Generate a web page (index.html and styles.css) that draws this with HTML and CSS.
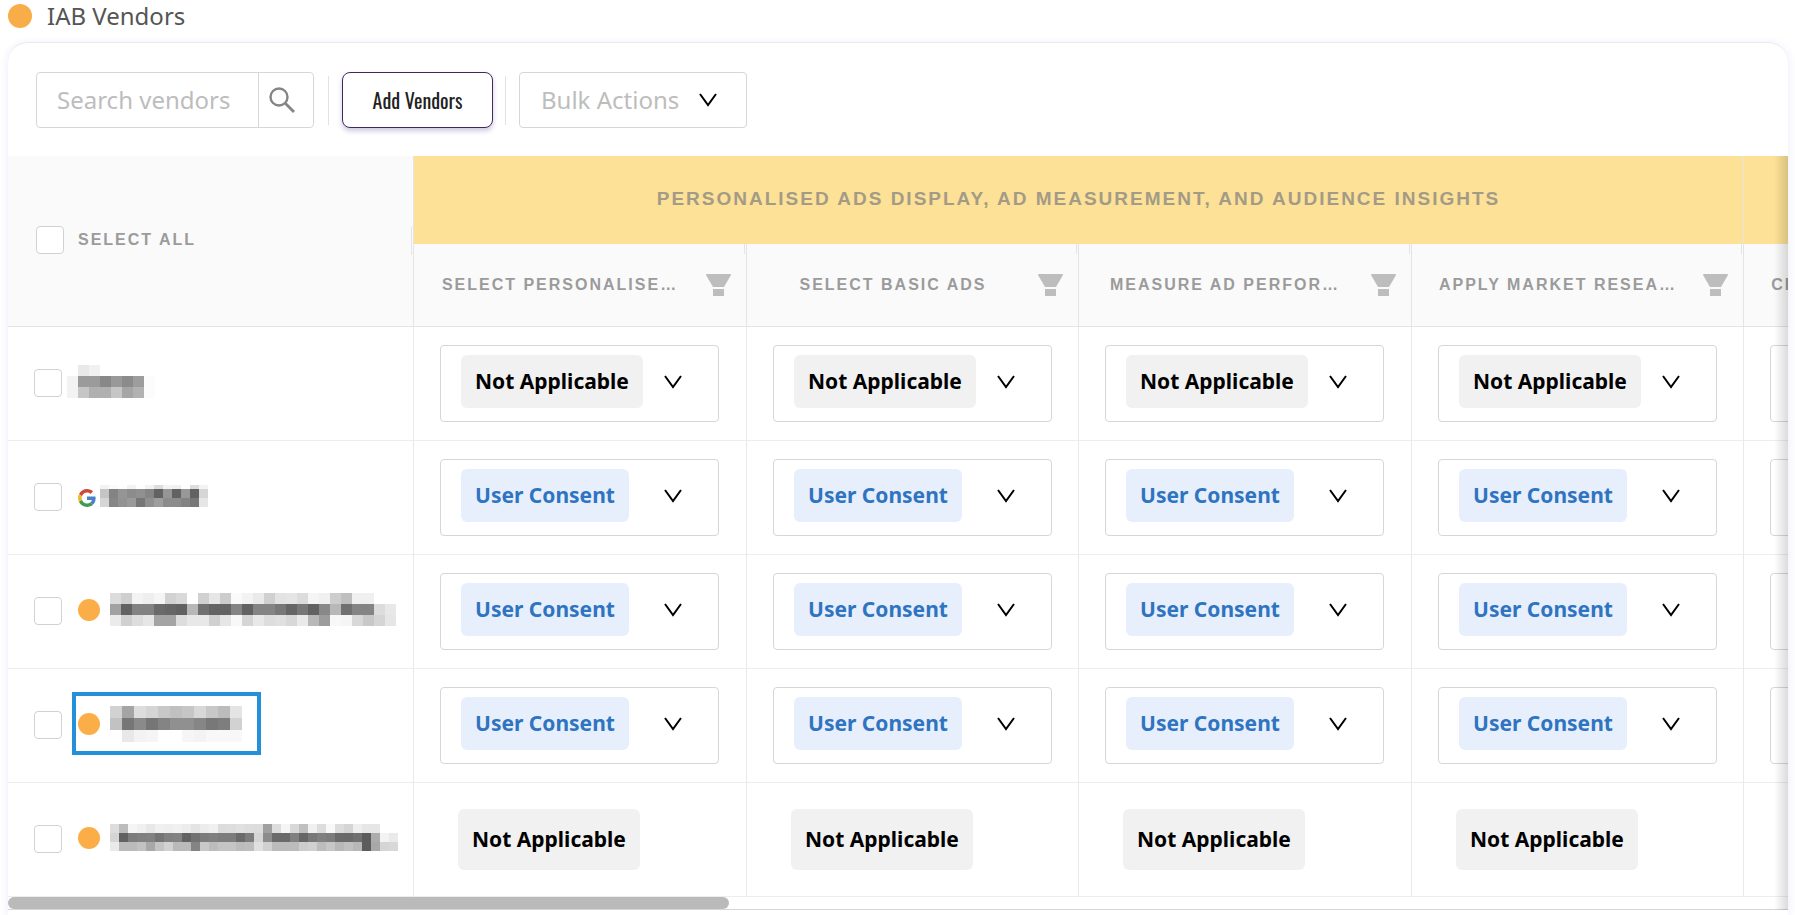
FILE: index.html
```html
<!DOCTYPE html>
<html lang="en">
<head>
    <meta charset="UTF-8">
    <meta name="viewport" content="width=device-width, initial-scale=1.0">
    <title>IAB Vendors</title>
    <link rel="stylesheet" href="styles.css">
</head>
<body>
    <h1 class="page-title"><span class="title-dot"></span>IAB Vendors</h1>

    <div class="card">
        <div class="toolbar">
            <form class="search-box">
                <input type="text" class="search-input" placeholder="Search vendors" aria-label="Search vendors">
                <button type="button" class="search-button" aria-label="Search">
                    <svg width="26" height="26" viewBox="0 0 26 26" fill="none" stroke="#858585" stroke-width="2.4">
                        <circle cx="10" cy="10" r="8.5"/>
                        <path d="M16 16L25 25" stroke-width="2.8"/>
                    </svg>
                </button>
            </form>
            <span class="divider"></span>
            <button type="button" class="add-button">Add Vendors</button>
            <span class="divider"></span>
            <div class="bulk-box">
                <select class="bulk-select" aria-label="Bulk Actions">
                    <option>Bulk Actions</option>
                </select>
                <svg class="chevron" viewBox="0 0 18 14"><path d="M1 1L9 12L17 1"/></svg>
            </div>
        </div>

        <div class="table-area">
            <div class="table-scroll">
                <table class="vendor-table">
                    <colgroup>
                        <col class="col-name"><col class="col-wide"><col class="col"><col class="col-wide"><col class="col"><col class="col-wide">
                    </colgroup>
                    <thead>
                        <tr class="group-row">
                            <th rowspan="2" class="select-all">
                                <label class="select-all-label"><input type="checkbox" class="check"> SELECT ALL</label>
                            </th>
                            <th colspan="4" class="group">PERSONALISED ADS DISPLAY, AD MEASUREMENT, AND AUDIENCE INSIGHTS</th>
                            <th class="group"></th>
                        </tr>
                        <tr class="purpose-row" id="purposes"></tr>
                    </thead>
                    <tbody id="vendors"></tbody>
                </table>
            </div>
            <div class="scrollbar"><div class="scrollbar-thumb"></div></div>
        </div>
    </div>

    <script>
        const purposes = ["SELECT PERSONALISE…", "SELECT BASIC ADS", "MEASURE AD PERFOR…", "APPLY MARKET RESEA…", "CREATE PERSONALISE…"];

        const googleIcon = `<svg class="google" viewBox="0 0 48 48">
            <path fill="#d0473c" d="M24 9.500c3.500 0 6.700 1.200 9.200 3.600l6.900-6.900C35.900 2.400 30.500 0 24 0 14.600 0 6.500 5.400 2.600 13.200l8 6.200C12.400 13.700 17.700 9.500 24 9.500z"/>
            <path fill="#4a80cc" d="M47 24.500c0-1.600-.2-3.100-.4-4.500H24v9h12.900c-.6 3-2.200 5.500-4.800 7.200l7.700 6C44.400 38 47 31.800 47 24.500z"/>
            <path fill="#efb92c" d="M10.500 28.600c-.5-1.500-.8-3-.8-4.600s.3-3.100.8-4.600l-8-6.200C.9 16.500 0 20.100 0 24s.9 7.500 2.600 10.800z"/>
            <path fill="#3f9b54" d="M24 48c6.500 0 11.900-2.100 15.900-5.800l-7.700-6c-2.200 1.500-4.900 2.300-8.200 2.300-6.300 0-11.600-4.200-13.500-9.900l-8 6.200C6.500 42.600 14.600 48 24 48z"/>
        </svg>`;
        const dotIcon = `<span class="vendor-dot"></span>`;

        // masked names: one hex shade per block
        const vendors = [
            { icon: "", cls: "plain", status: "na", size: 11, mask: [
                "ff e9 f1 ff ff ff ff ff",
                "f3 9b 9b 88 99 8b 9d fc",
                "f3 c6 b0 b0 c6 a5 b2 fc"] },
            { icon: googleIcon, cls: "tight", status: "consent", size: 9, mask: [
                "c4 83 95 8c 90 85 62 95 62 98 62 d6",
                "d5 86 92 9a 77 90 9e 8c 8c 84 77 e6"], top: "f3 fb fe f3 fe f3 dd f3 f0 fe dd f3" },
            { icon: dotIcon, cls: "", status: "consent", size: 11, mask: [
                "dc cf f3 ee f5 d2 d9 ff d0 e6 cc fa f3 ea d0 e3 e5 dc f5 f0 cd bf f0 f0 ff ff",
                "a2 62 82 82 6a 66 62 b8 70 64 64 84 62 84 84 78 66 78 62 88 b8 70 84 84 dc e8",
                "eb d0 dd e6 a4 a4 dd e8 e8 d0 e6 f8 d5 e8 dd e0 d8 ea b8 9c f8 f5 d8 c8 d5 e6"] },
            { icon: dotIcon, cls: "marked", status: "consent", size: 12, mask: [
                "d2 a4 dd d5 c8 c0 c6 d8 c8 bc e4",
                "c2 76 8a 76 84 90 90 86 78 7e d2",
                "ff e8 f3 f5 ff ff f6 f3 f8 f8 f8"] },
            { icon: dotIcon, cls: "", status: "locked", size: 9, mask: [
                "dd bc f5 f0 e8 f0 ee f0 ec e4 ec f0 dc dd e0 dd dc a0 dd f5 d8 c0 f0 dd f8 dd d5 ee e6 e6 ff ff",
                "d5 62 7c 80 82 74 80 82 62 72 7c 80 7c 7c 6a 7c d5 8c 6a 6a 80 66 78 80 7c 6a 6a 70 5c ac f3 ea",
                "ea bb bb c2 a8 c4 d2 ba ba 84 c8 bc c4 c4 bc be e0 d0 bb bb bc cc d0 bc c6 b8 c0 b8 5c a8 d5 d8"] }
        ];

        function maskSvg(v) {
            const s = v.size;
            const pad = v.top ? 4 : 0;
            let rects = "";
            const addRow = (row, y, h) => row.split(" ").forEach((c, i) => {
                rects += `<rect x="${i * s}" y="${y}" width="${s}" height="${h}" fill="#${c}${c}${c}"/>`;
            });
            if (v.top) addRow(v.top, 0, pad);
            v.mask.forEach((row, i) => addRow(row, pad + i * s, s));
            const w = v.mask[0].split(" ").length * s;
            const h = pad + v.mask.length * s;
            return `<svg class="mask" width="${w}" height="${h}" shape-rendering="crispEdges">${rects}</svg>`;
        }

        function statusCell(status, label) {
            if (status === "locked") {
                return `<td><span class="tag tag-na tag-locked">Not Applicable</span></td>`;
            }
            const na = status === "na";
            return `<td><div class="status-box">
                <select class="tag ${na ? "tag-na" : "tag-consent"}" aria-label="${label}">
                    <option${na ? " selected" : ""}>Not Applicable</option>
                    <option${na ? "" : " selected"}>User Consent</option>
                </select>
                <svg class="chevron" viewBox="0 0 18 14"><path d="M1 1L9 12L17 1"/></svg>
            </div></td>`;
        }

        document.getElementById("purposes").innerHTML = purposes.map(p => `
            <th><div class="purpose"><span class="purpose-name">${p}</span>
                <button type="button" class="filter-button" aria-label="Filter">
                    <svg width="25" height="23" viewBox="0 0 25 23" fill="#bdbdbd">
                        <path d="M0 1q0-1 1-1h23q1 0 1 1l-7 12h-11z"/><path d="M7 15h11v7h-11z"/>
                    </svg>
                </button></div></th>`).join("");

        document.getElementById("vendors").innerHTML = vendors.map((v, i) => `
            <tr><td><div class="vendor">
                <input type="checkbox" class="check" aria-label="Vendor ${i + 1}">
                <div class="vendor-name ${v.cls}">${v.icon}${maskSvg(v)}</div>
            </div></td>${purposes.map(p => statusCell(v.status, p)).join("")}</tr>`).join("");
    </script>
</body>
</html>
```
FILE: styles.css
```css
* {
    box-sizing: border-box;
}
body {
    font-family: "Noto Sans", "Open Sans", sans-serif;
    margin: 0;
    padding: 0 7px 0 8px;
    background: #fff;
    display: flex;
    flex-direction: column;
    height: 100vh;
    overflow: hidden;
}
button,
input,
select {
    font-family: inherit;
    margin: 0;
}
.page-title {
    display: flex;
    align-items: center;
    gap: 15px;
    height: 32px;
    margin: 0 0 10px;
    font-size: 24px;
    line-height: 32px;
    font-weight: 400;
    color: #555;
}
.title-dot {
    width: 24px;
    height: 24px;
    border-radius: 50%;
    background: #f9ad48;
}
.card {
    flex: 1;
    background: #fff;
    border-top: 1px solid #e6eaf1;
    border-radius: 20px 20px 0 0;
    box-shadow: 0 2px 10px rgba(80, 80, 220, 0.12);
}

/* Toolbar */
.toolbar {
    display: flex;
    align-items: center;
    padding: 29px 28px 28px;
}
.search-box {
    display: flex;
    height: 56px;
    width: 278px;
    border: 1px solid #d6d6d6;
    border-radius: 4px;
}
.search-input {
    flex: 1;
    min-width: 0;
    padding: 0 0 2px 20px;
    border: none;
    border-right: 1px solid #d6d6d6;
    background: none;
    font-size: 24px;
    outline: none;
}
.search-input::placeholder {
    color: #bdbdbd;
}
.search-button {
    width: 54px;
    padding: 0 10px;
    border: none;
    background: none;
    text-align: left;
    cursor: pointer;
}
.search-button svg {
    display: block;
}
.divider {
    width: 1px;
    height: 49px;
    margin: 0 13px 0 14px;
    background: #e2e2e2;
}
.divider:nth-of-type(2) {
    margin: 0 13px 0 12px;
}
.add-button {
    width: 151px;
    height: 56px;
    padding: 0;
    border: 1px solid #43285f;
    border-radius: 8px;
    background: #fff;
    box-shadow: 0 3px 5px rgba(60, 40, 130, 0.25);
    font-family: Oswald, Roboto, sans-serif;
    font-size: 20px;
    font-weight: 400;
    color: #222;
    cursor: pointer;
}
.bulk-box {
    display: flex;
    align-items: center;
    gap: 19px;
    width: 228px;
    height: 56px;
    padding-left: 21px;
    border: 1px solid #d6d6d6;
    border-radius: 4px;
}
.bulk-select {
    appearance: none;
    padding: 0 0 2px;
    border: none;
    background: none;
    font-size: 24px;
    color: #bdbdbd;
}
.chevron {
    width: 18px;
    height: 14px;
    fill: none;
    stroke: #000;
    stroke-width: 2;
}

/* Vendor table */
.table-area {
    position: relative;
}
.table-area::after {
    content: "";
    position: absolute;
    top: 0;
    right: 0;
    bottom: 0;
    width: 14px;
    background: linear-gradient(to right, rgba(0, 0, 0, 0), rgba(0, 0, 0, 0.14));
    pointer-events: none;
}
.table-scroll {
    overflow: hidden;
}
.vendor-table {
    width: 2069px;
    table-layout: fixed;
    border-collapse: separate;
    border-spacing: 0;
}
.col-name {
    width: 406px;
}
.col-wide {
    width: 333px;
}
.col {
    width: 332px;
}
th {
    position: relative;
    padding: 0;
    background: #fafafa;
    border-right: 1px solid #e4e4e4;
    border-bottom: 1px solid #e4e4e4;
    font-family: "Liberation Sans", Arial, sans-serif;
    font-size: 16px;
    font-weight: 700;
    letter-spacing: 2px;
    color: #9b9b9b;
}
td {
    height: 114px;
    padding: 0;
    border-right: 1px solid #e9e9e9;
    border-bottom: 1px solid #ededed;
}
.group-row {
    height: 88px;
}
.group {
    padding-bottom: 2px;
    background: #fce196;
    border-bottom: none;
    font-size: 19px;
    color: #a39b87;
}
.purpose-row {
    height: 83px;
}
.purpose-row th::after,
.select-all::after {
    content: "";
    position: absolute;
    top: 0;
    right: 1px;
    width: 1px;
    height: 10px;
    background: #e4e4e4;
}
.select-all::after {
    top: 71px;
    height: 28px;
}
.select-all-label {
    display: flex;
    align-items: center;
    gap: 14px;
    padding: 0 0 2px 28px;
}
.check {
    appearance: none;
    flex: none;
    width: 28px;
    height: 28px;
    border: 1px solid #d2d2d2;
    border-radius: 4px;
    background: #fff;
}
.check:checked {
    background: #2f74c0;
}
.purpose {
    display: flex;
    align-items: center;
    justify-content: space-between;
    padding: 0 15px 0 25px;
}
.purpose-name {
    width: 242px;
    white-space: nowrap;
}
.filter-button {
    padding: 0;
    border: none;
    background: none;
    cursor: pointer;
}
.filter-button svg {
    display: block;
}
.vendor {
    display: flex;
    align-items: center;
    gap: 16px;
    padding: 0 0 2px 26px;
}
.vendor-name {
    display: flex;
    align-items: center;
    gap: 10px;
    margin-bottom: 2px;
}
.vendor-name.plain {
    margin-left: -11px;
}
.vendor-name.tight {
    align-items: flex-end;
    gap: 4px;
}
.vendor-name.marked {
    width: 189px;
    height: 63px;
    margin-left: -6px;
    padding-left: 2px;
    border: 4px solid #2490d9;
}
.vendor-dot {
    width: 22px;
    height: 22px;
    border-radius: 50%;
    background: #fbad48;
}
.google {
    width: 18px;
    height: 18px;
}
.mask {
    display: block;
}
.status-box {
    display: grid;
    grid-template-columns: 182px 18px;
    justify-items: start;
    gap: 21px;
    width: 279px;
    height: 77px;
    margin-left: 26px;
    padding: 9px 0 13px 20px;
    border: 1px solid #d6d6d6;
    border-radius: 4px;
}
.status-box .chevron {
    align-self: center;
}
.tag {
    appearance: none;
    field-sizing: content;
    height: 53px;
    padding: 0 14px 2px;
    border: none;
    border-radius: 6px;
    font-size: 21px;
    font-weight: 700;
}
.tag-na {
    background: #f1f1f1;
    color: #000;
}
.tag-consent {
    background: #e7effc;
    color: #2f74c0;
}
.tag-locked {
    display: inline-block;
    height: 61px;
    margin-left: 44px;
    line-height: 61px;
    vertical-align: middle;
}

/* Horizontal scrollbar */
.scrollbar {
    height: 13px;
    border-bottom: 1px solid #d6d6d6;
}
.scrollbar-thumb {
    width: 40.5%;
    height: 12px;
    border-radius: 6px;
    background: #bababa;
}
```
